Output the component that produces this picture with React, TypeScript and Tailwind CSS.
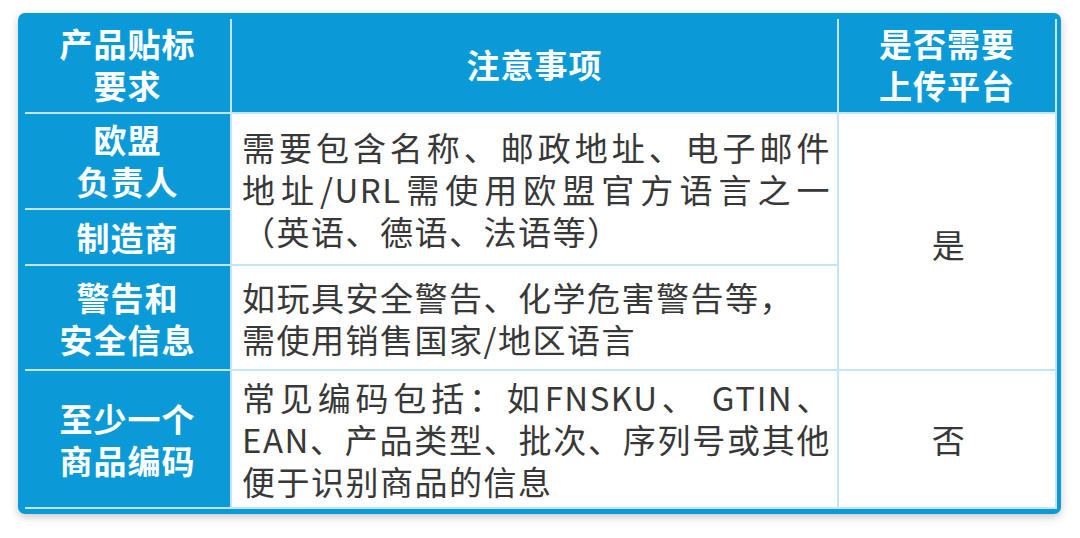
const blueCell =
  "flex items-center justify-center border-r-2 border-b-2 border-[#c3e5f7] bg-[#0b9ad8] text-center text-[33px] font-bold leading-[42px] tracking-[1px] text-white";
const whiteCell =
  "flex flex-col justify-center border-r-2 border-b-2 border-[#c3e5f7] bg-white pl-[10px] pr-[6px] text-[33px] leading-[42px] tracking-[1.5px] text-[#383838] whitespace-nowrap";
const just = "text-justify [text-align-last:justify]";

const App = () => {
  return (
    <div className="min-h-[538px] bg-white pt-[13px] pl-[18px] font-['Noto_Sans_CJK_SC','Noto_Sans',sans-serif]">
      {/* table frame */}
      <div className="w-[1043px] rounded-[7px] bg-[#0b9ad8] pt-[6px] pl-[7px] pr-[4px] pb-[5px] shadow-[0_3px_8px_rgba(0,0,0,0.22)]">
        <div className="grid grid-cols-[207px_607px_218px] grid-rows-[95px_96px_56px_105px_138px]">
          {/* header */}
          <div className={`${blueCell} pb-[4px]`}>
            <div>
              产品贴标
              <br />
              要求
            </div>
          </div>
          <div className={`${blueCell} pb-[4px]`}>注意事项</div>
          <div className={`${blueCell} pb-[4px]`}>
            <div>
              是否需要
              <br />
              上传平台
            </div>
          </div>

          {/* 欧盟负责人 */}
          <div className={`${blueCell} pb-[2px]`}>
            <div>
              欧盟
              <br />
              负责人
            </div>
          </div>
          <div className={`${whiteCell} row-span-2`}>
            <div className={just}>需要包含名称、邮政地址、电子邮件</div>
            <div className={just}>地址/URL需使用欧盟官方语言之一</div>
            <div>（英语、德语、法语等）</div>
          </div>
          <div className={`${whiteCell} row-span-3 items-center pl-0 pr-0 pt-[4px]`}>是</div>

          {/* 制造商 */}
          <div className={`${blueCell} col-start-1`}>制造商</div>

          {/* 警告和安全信息 */}
          <div className={`${blueCell} col-start-1`}>
            <div>
              警告和
              <br />
              安全信息
            </div>
          </div>
          <div className={whiteCell}>
            <div>如玩具安全警告、化学危害警告等，</div>
            <div>需使用销售国家/地区语言</div>
          </div>

          {/* 至少一个商品编码 */}
          <div className={blueCell}>
            <div>
              至少一个
              <br />
              商品编码
            </div>
          </div>
          <div className={`${whiteCell} leading-[40px]`}>
            <div className={just}>常见编码包括：如FNSKU、 GTIN、</div>
            <div className={just}>EAN、产品类型、批次、序列号或其他</div>
            <div>便于识别商品的信息</div>
          </div>
          <div className={`${whiteCell} items-center pl-0 pr-0`}>否</div>
        </div>
      </div>
    </div>
  );
};

export default App;
